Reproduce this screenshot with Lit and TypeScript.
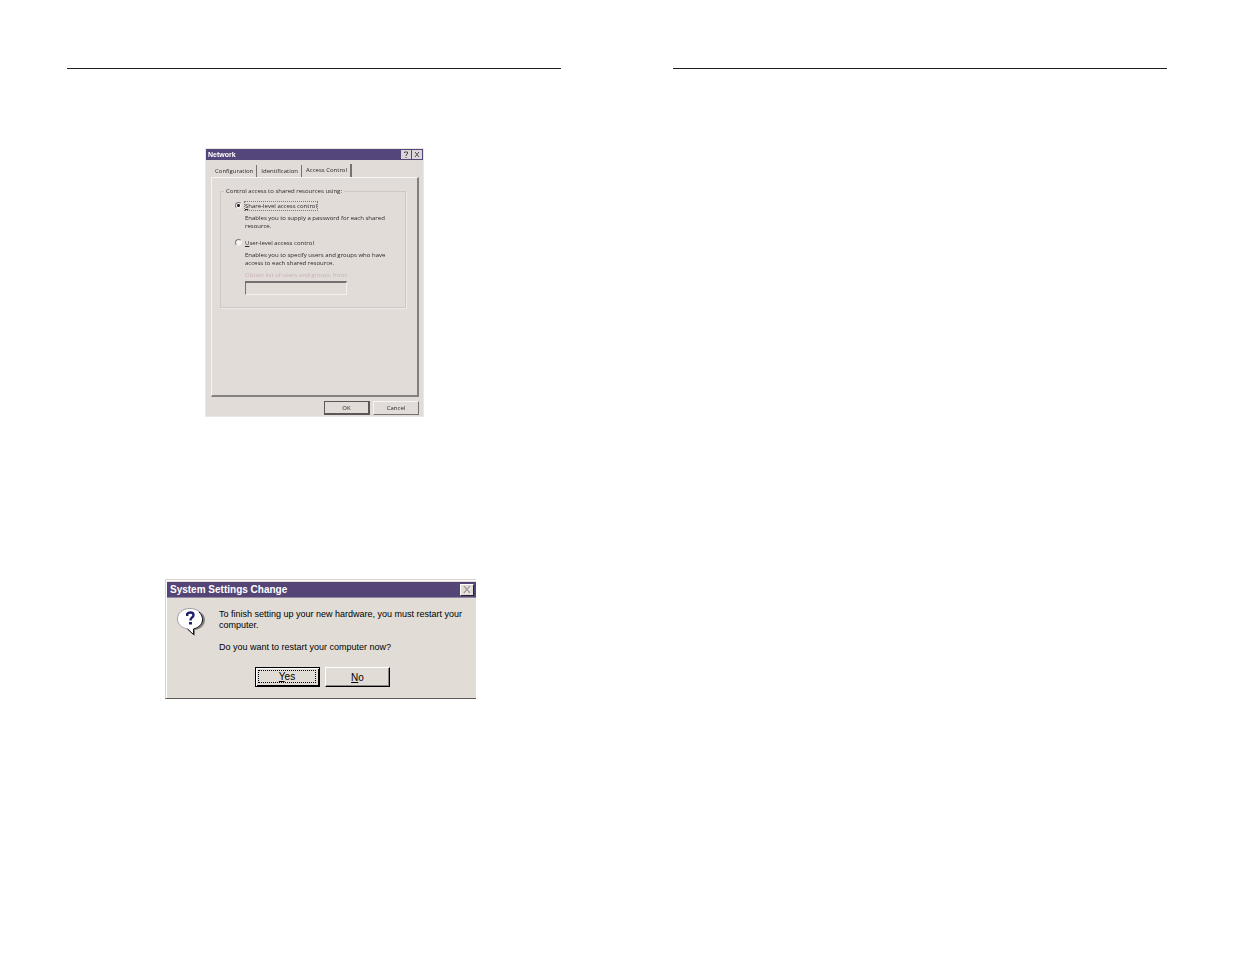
import { LitElement, html, css } from "lit";
import { customElement } from "lit/decorators.js";

@customElement("network-dialog")
class NetworkDialog extends LitElement {
  static styles = css`
    :host { display: block; }
    * { box-sizing: border-box; }
    .dialog {
      width: 219px; background: #e1dcd8; color: #2c2529;
      font: 6px/8px "Open Sans", "Liberation Sans", sans-serif;
      border: 1px solid #ebe7e4; filter: blur(0.4px);
    }
    .title {
      display: flex; align-items: center; justify-content: space-between;
      height: 11px; background: #54457a; color: #fff; padding: 0 1px 0 2px;
      font: bold 7px/10px "Liberation Sans", sans-serif;
    }
    h2 { font: inherit; margin: 0; }
    .tools { display: flex; gap: 1px; }
    button { font: inherit; color: inherit; background: #e1dcd8; padding: 0; margin: 0; border: 0; border-radius: 0; }
    .tools button { display: block; width: 10px; height: 9px; background: #ddd6d8; }
    svg { display: block; width: 100%; height: 100%; }
    .tabs { display: flex; align-items: flex-end; margin: 4px 5px 0; height: 13px; }
    .tabs button { height: 12px; padding: 0 3px 0 4px; border-right: 1px solid #77706f; white-space: nowrap; }
    .tabs .active { height: 13px; padding: 0 3px 1px 4px; border-right-width: 2px; }
    .panel {
      margin: 0 4px 0 5px; height: 220px; padding: 9px 11px 0 8px;
      border: 1px solid #f7f5f3; border-right: 2px solid #858080; border-bottom: 2px solid #858080;
    }
    fieldset { margin: 0; min-width: 0; height: 121px; border: 1px solid #cdc7c5; padding: 7px 12px 0 14px; box-shadow: 1px 1px #eeeae7; }
    legend { padding: 0 2px; margin-left: -11px; }
    .option { display: grid; grid-template-columns: 10px 1fr; height: 37px; align-content: start; }
    .option p { grid-column: 2; margin: 4px 0 0; white-space: nowrap; }
    .option label { justify-self: start; }
    .chosen label { outline: 1px dotted #7e7777; }
    u { text-underline-offset: 1px; }
    input[type="radio"] {
      appearance: none; margin: 0; width: 7px; height: 7px; border-radius: 50%;
      background: #f6f4f2; border: 1px solid; border-color: #7e7777 #ece8e5 #ece8e5 #7e7777;
    }
    input[type="radio"]:checked { background: radial-gradient(#25202a 1px, #f6f4f2 2px); }
    .source { display: block; margin: -5px 0 2px 10px; color: #cbb0b7; }
    input[type="text"] {
      display: block; width: 102px; height: 14px; margin-left: 10px; padding: 0 2px; font: inherit;
      background: #e1dcd8; border: 1px solid; border-top-width: 2px;
      border-color: #766e70 #f3f0ed #f3f0ed #766e70;
    }
    .actions { display: flex; justify-content: flex-end; gap: 3px; padding: 4px 4px 1px; }
    .actions button { width: 46px; height: 14px; border: 1px solid; border-color: #f6f4f2 #777071 #777071 #f6f4f2; }
    .actions .default { border: 1px solid #5d5557; border-right-width: 2px; border-bottom-width: 2px; }
  `;
  render() {
    return html`<section class="dialog" aria-label="Network">
      <header class="title"><h2>Network</h2>
        <div class="tools">
          <button aria-label="Help"><svg viewBox="0 0 10 9"><path d="M3.5 3V2H6.5V4L5 5V6M5 7V8" fill="none" stroke="#51494f"/></svg></button>
          <button aria-label="Close"><svg viewBox="0 0 10 9"><path d="M3 2L7 7M7 2L3 7" fill="none" stroke="#51494f"/></svg></button>
        </div>
      </header>
      <nav class="tabs"><button>Configuration</button><button>Identification</button><button class="active">Access Control</button></nav>
      <div class="panel">
        <fieldset>
          <legend>Control access to shared resources using:</legend>
          <div class="option chosen"><input id="share" type="radio" name="level" checked /><label for="share"><u>S</u>hare-level access control</label>
            <p>Enables you to supply a password for each shared<br />resource.</p></div>
          <div class="option"><input id="user" type="radio" name="level" /><label for="user"><u>U</u>ser-level access control</label>
            <p>Enables you to specify users and groups who have<br />access to each shared resource.</p></div>
          <label class="source" for="source">Obtain list of users and groups from:</label>
          <input id="source" type="text" disabled />
        </fieldset>
      </div>
      <footer class="actions"><button class="default">OK</button><button>Cancel</button></footer>
    </section>`;
  }
}

@customElement("restart-dialog")
class RestartDialog extends LitElement {
  static styles = css`
    :host { display: block; }
    * { box-sizing: border-box; }
    .dialog {
      width: 311px; background: #e1dcd6; color: #000; border: 1px solid #d6d1cc; border-right: 0;
      border-bottom: 1px solid #5d5a58; box-shadow: inset 1px 1px #fff;
      font: 9px/11px "Liberation Sans", sans-serif; padding: 2px 0 11px 1px;
    }
    .title {
      display: flex; align-items: center; justify-content: space-between; height: 16px;
      background: #544576; border-bottom: 1px solid #9488a5; color: #fff; padding: 0 2px 0 3px;
      font: bold 10px/15px "Liberation Sans", sans-serif;
    }
    h2 { font: inherit; margin: 0; }
    button { font: inherit; color: inherit; background: #e1dcd6; padding: 0; margin: 0; border-radius: 0; }
    .close { width: 14px; height: 12px; border: 1px solid; border-color: #fff #2a2530 #2a2530 #fff; }
    .close svg { display: block; width: 12px; height: 10px; }
    .body { display: flex; gap: 14px; padding: 10px 8px 0 10px; }
    .icon { width: 28px; height: 28px; flex: none; }
    .text { padding-top: 1px; white-space: nowrap; }
    p { margin: 0 0 11px; }
    .actions { display: flex; justify-content: center; gap: 5px; margin: 3px 0 0 2px; font-size: 10px; }
    .actions button { width: 65px; height: 20px; border: 1px solid; border-color: #fff #000 #000 #fff; box-shadow: inset -1px -1px #8d8783; }
    .actions .default { border: 1px solid #000; box-shadow: inset 1px 1px #fff, inset -1px -1px #000; padding: 2px 3px 3px 2px; }
    .focus { display: block; height: 100%; border: 1px dotted #000; }
    u { text-underline-offset: 1px; }
  `;
  render() {
    return html`<section class="dialog" aria-label="System Settings Change">
      <header class="title"><h2>System Settings Change</h2>
        <button class="close" aria-label="Close"><svg viewBox="0 0 12 10"><path d="M4 2L10 9M10 2L4 9" stroke="#fff"/><path d="M3 1L9 8M9 1L3 8" stroke="#a59f9b" stroke-width="1.4"/></svg></button>
      </header>
      <div class="body">
        <svg class="icon" viewBox="0 0 28 28" aria-hidden="true">
          <path d="M15 2C23 2 28 6 28 12C28 17 24 21 18 22L18 28L12 22Z" fill="#858083"/>
          <path d="M13 .5C20.5 .5 25.5 4.8 25.5 11C25.5 16 22 20 16.5 21V26.5L10.5 21C4.5 20 .5 16 .5 11C.5 4.8 5.5 .5 13 .5Z" fill="#fff" stroke="#a29da2"/>
          <path d="M22 4C29 11 25 19 16.5 21V26.5L10.5 21" fill="none" stroke="#111"/>
          <path d="M10.2 8V5.8Q11 4.5 13.5 4.5Q16.5 4.5 16.5 7Q16.5 8.6 15 9.6Q13.5 10.6 13.5 12.5" fill="none" stroke="#20206f" stroke-width="2.4"/>
          <path d="M12 14H15V16.5H12Z" fill="#20206f"/>
        </svg>
        <div class="text">
          <p>To finish setting up your new hardware, you must restart your<br />computer.</p>
          <p>Do you want to restart your computer now?</p>
        </div>
      </div>
      <footer class="actions"><button class="default"><span class="focus"><u>Y</u>es</span></button><button><u>N</u>o</button></footer>
    </section>`;
  }
}

@customElement("app-root")
class AppRoot extends LitElement {
  static styles = css`
    :host { display: block; background: #fff; min-height: 100vh; }
    .spread { display: grid; grid-template-columns: 1fr 1fr; gap: 112px; padding: 68px 68px 0 67px; }
    .page { border-top: 1px solid #231f20; min-width: 0; }
    network-dialog { margin: 79px 0 0 138px; }
    restart-dialog { margin: 162px 0 0 98px; }
  `;
  render() {
    return html`<main class="spread">
      <article class="page"><network-dialog></network-dialog><restart-dialog></restart-dialog></article>
      <article class="page"></article>
    </main>`;
  }
}
